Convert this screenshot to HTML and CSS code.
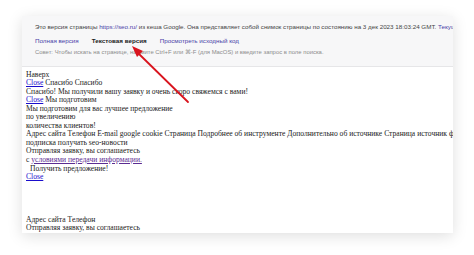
FILE: index.html
```html
<!DOCTYPE html>
<html lang="ru">
<head>
<meta charset="utf-8">
<link rel="stylesheet" href="styles.css">
</head>
<body>
<div class="stage">
  <div class="card">
    <div class="cache-head">
      <div class="line1">Это версия страницы <a class="lnk" href="#">https://seo.ru/</a> из кеша Google. Она представляет собой снимок страницы по состоянию на 3 дек 2023 18:03:24 GMT. <a class="lnk" href="#">Текущая версия</a></div>
      <div class="line2"><a class="lnk" href="#">Полная версия</a><b class="cur">Текстовая версия</b><a class="lnk" href="#">Просмотреть исходный код</a></div>
      <div class="line3">Совет: Чтобы искать на странице, нажмите Ctrl+F или ⌘-F (для MacOS) и введите запрос в поле поиска.</div>
    </div>
    <div class="page">
      <div>Наверх</div>
      <div><a class="blue" href="#">Close</a> Спасибо Спасибо</div>
      <div>Спасибо! Мы получили вашу заявку и очень скоро свяжемся с вами!</div>
      <div><a class="blue" href="#">Close</a> Мы подготовим</div>
      <div>Мы подготовим для вас лучшее предложение</div>
      <div>по увеличению</div>
      <div>количества клиентов!</div>
      <div class="nowrap">Адрес сайта Телефон E-mail google cookie Страница Подробнее об инструменте Дополнительно об источнике Страница источник форма</div>
      <div>подписка получать seo-новости</div>
      <div>Отправляя заявку, вы соглашаетесь</div>
      <div>с <a class="visited" href="#">условиями передачи информации.</a></div>
      <div class="indent">Получить предложение!</div>
      <div><a class="blue" href="#">Close</a></div>
      <div class="blank"></div>
      <div class="blank"></div>
      <div class="blank"></div>
      <div class="blank"></div>
      <div>Адрес сайта Телефон</div>
      <div>Отправляя заявку, вы соглашаетесь</div>
    </div>
  </div>
  <svg class="arrow" width="474" height="255" viewBox="0 0 474 255">
    <line x1="188" y1="102" x2="138" y2="53" stroke="#d9141e" stroke-width="1.8" stroke-linecap="round"/>
    <polygon points="132,46 143,51 137,57" fill="#d9141e"/>
  </svg>
</div>
</body>
</html>
```
FILE: styles.css
```css
html, body {
  margin: 0;
  padding: 0;
  background: #ffffff;
}
.stage {
  position: relative;
  width: 474px;
  height: 255px;
  padding: 16px 0 0 22px;
  box-sizing: border-box;
  overflow: hidden;
}
.card {
  width: 431px;
  height: 217px;
  background: #ffffff;
  box-shadow: 0 3px 14px rgba(0, 0, 0, 0.13);
  overflow: hidden;
}
.cache-head {
  background: #f7f7f8;
  border-bottom: 1px solid #e6e6e8;
  padding: 7px 0 10px 13px;
  font-family: "Liberation Sans", Arial, sans-serif;
  font-size: 6.25px;
  line-height: 8px;
  color: #444444;
  white-space: nowrap;
  overflow: hidden;
}
.lnk {
  color: #4a43a8;
  text-decoration: none;
}
.line2 {
  margin-top: 6px;
  display: flex;
  gap: 13px;
}
.cur {
  color: #222222;
  font-weight: bold;
}
.line3 {
  margin-top: 3px;
  font-size: 5.9px;
  color: #8c8c8c;
}
.page {
  padding: 3.5px 0 0 4px;
  font-family: "Liberation Serif", "Times New Roman", serif;
  font-size: 7.6px;
  line-height: 8.55px;
  color: #222222;
}
.page .nowrap {
  white-space: nowrap;
}
.blank {
  height: 8.55px;
}
.indent {
  padding-left: 4px;
}
.blue {
  color: #1a0dcc;
}
.visited {
  color: #5b2c92;
}
.arrow {
  position: absolute;
  left: 0;
  top: 0;
  pointer-events: none;
}
```
